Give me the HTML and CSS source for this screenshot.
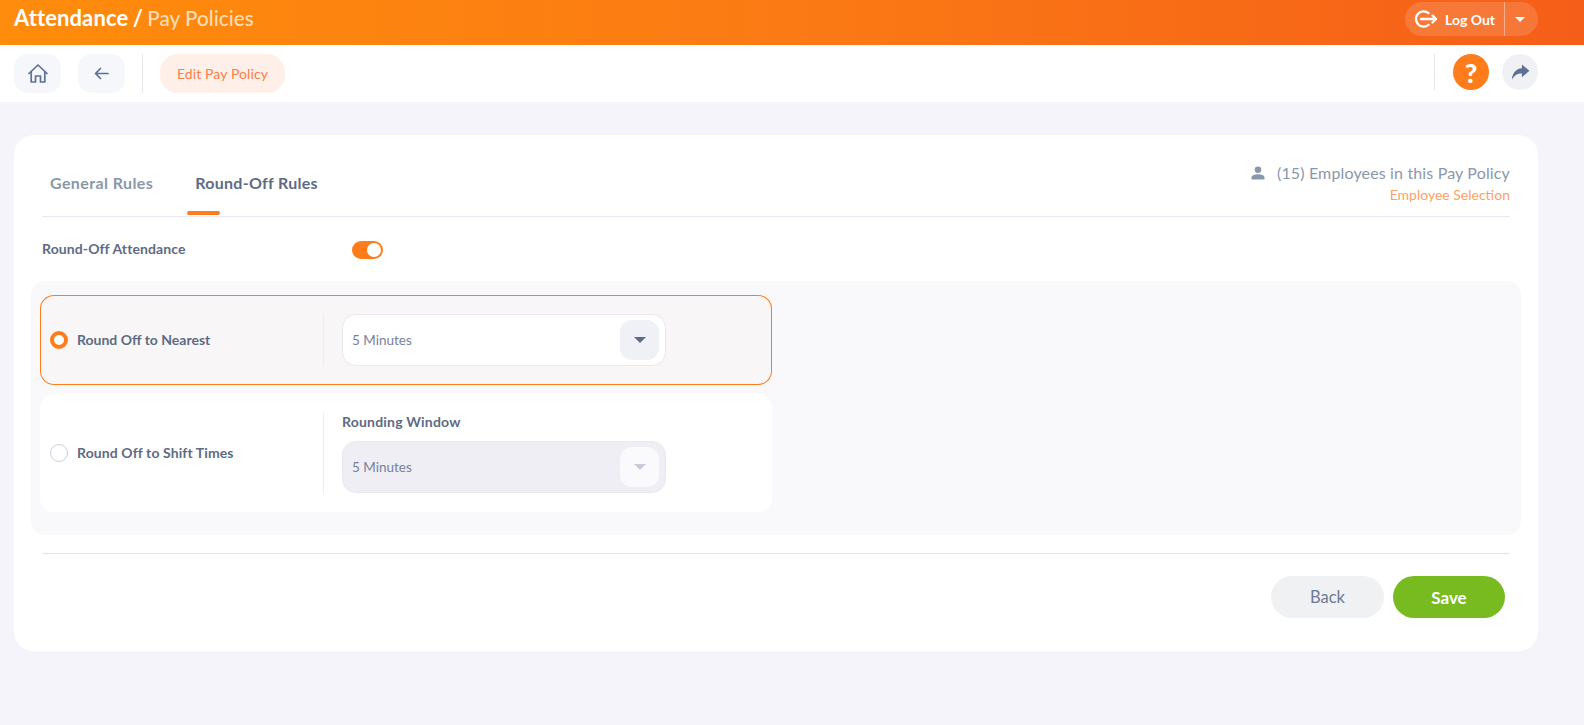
FILE: index.html
```html
<!DOCTYPE html>
<html lang="en">
<head>
<meta charset="utf-8">
<title>Pay Policies</title>
<link rel="stylesheet" href="styles.css">
</head>
<body>
<header class="topbar">
  <h1 class="crumbs"><span class="crumb-main">Attendance /</span> <span class="crumb-sub">Pay Policies</span></h1>
  <div class="logout">
    <button class="logout-btn">
      <svg class="logout-icon" width="24" height="18" viewBox="0 0 24 18" fill="none" stroke="#fff" stroke-width="2.4" stroke-linecap="round" stroke-linejoin="round"><path d="M14.5 3.2A7.6 7.6 0 1 0 14.5 14.8"/><path d="M7 9H22M18.5 5.5 22 9l-3.5 3.5"/></svg>
      <span>Log Out</span>
    </button>
    <span class="logout-caret"><i class="caret caret-white"></i></span>
  </div>
</header>

<nav class="toolbar">
  <button class="tool-btn" aria-label="Home">
    <svg width="20" height="19" viewBox="0 0 20 19" fill="none" stroke="#5d7196" stroke-width="1.7" stroke-linejoin="round" stroke-linecap="round"><path d="M1 9.500 10 1l9 8.500"/><path d="M3.200 7.800V18h4.300v-6h5v6h4.300V7.800"/></svg>
  </button>
  <button class="tool-btn" aria-label="Back">
    <svg width="15" height="13" viewBox="0 0 15 13" fill="none" stroke="#5d7196" stroke-width="1.7" stroke-linecap="round" stroke-linejoin="round"><path d="M14 6.500H1.500M6.500 1.500l-5 5 5 5"/></svg>
  </button>
  <span class="tool-divider"></span>
  <span class="tool-pill">Edit Pay Policy</span>
  <span class="tool-spacer"></span>
  <span class="tool-divider tool-divider-right"></span>
  <span class="help">?</span>
  <span class="share">
    <svg width="19" height="16" viewBox="0 0 20 17"><path fill="#5d7196" d="M11.500 0.500 19.500 7.300l-8 6.700V10C6.500 10 3.500 12 0.800 16.500 1.300 10 5 5 11.500 4.500z"/></svg>
  </span>
</nav>

<main class="page">
  <section class="card">
    <div class="tabs">
      <div class="tab-list">
        <span class="tab">General Rules</span>
        <span class="tab tab-active">Round-Off Rules</span>
      </div>
      <div class="emp">
        <div class="emp-count">
          <svg width="14" height="14" viewBox="0 0 14 14" fill="#8996ab"><circle cx="7" cy="3.800" r="3.300"/><path d="M0.500 13.500V11.500C0.500 9.300 4 8.300 7 8.300s6.500 1 6.500 3.200v2z"/></svg>
          <span>(15) Employees in this Pay Policy</span>
        </div>
        <a class="emp-link">Employee Selection</a>
      </div>
    </div>

    <div class="toggle-row">
      <span class="toggle-label">Round-Off Attendance</span>
      <span class="toggle"><i class="toggle-knob"></i></span>
    </div>

    <div class="panel">
      <div class="option option-on">
        <div class="option-left">
          <span class="radio radio-on"></span>
          <span class="option-label option-label-tight">Round Off to Nearest</span>
        </div>
        <div class="option-right">
          <div class="select">
            <span>5 Minutes</span>
            <span class="select-btn"><i class="caret caret-dark"></i></span>
          </div>
        </div>
      </div>
      <div class="option">
        <div class="option-left">
          <span class="radio"></span>
          <span class="option-label">Round Off to Shift Times</span>
        </div>
        <div class="option-right">
          <div class="field-label">Rounding Window</div>
          <div class="select select-off">
            <span>5 Minutes</span>
            <span class="select-btn"><i class="caret caret-light"></i></span>
          </div>
        </div>
      </div>
    </div>

    <div class="actions">
      <button class="btn btn-back">Back</button>
      <button class="btn btn-save">Save</button>
    </div>
  </section>
</main>
</body>
</html>
```

FILE: styles.css
```css
* { box-sizing: border-box; }
html, body { margin: 0; padding: 0; }
body {
  background: #f4f4fa;
  font-family: "Lato", "Noto Sans", sans-serif;
  color: #5d6b85;
  height: 725px;
  overflow: hidden;
}
button { font-family: inherit; border: 0; padding: 0; cursor: pointer; }

.topbar {
  height: 45px;
  padding: 2px 46px 9px 14px;
  display: flex;
  justify-content: space-between;
  align-items: flex-start;
  background: linear-gradient(90deg, #ff8c0c 0%, #fb7a14 50%, #f55e18 100%);
}
.crumbs { margin: 0; font-size: 20.700px; line-height: 32px; font-weight: 400; word-spacing: -1px; }
.crumb-main { color: #fff; font-weight: 700; font-size: 22px; letter-spacing: .1px; }
.crumb-sub { color: #fedcb4; font-weight: 500; word-spacing: 0; }

.logout {
  width: 133px;
  height: 34px;
  display: flex;
  background: rgba(255,255,255,.14);
  border-radius: 17px;
}
.logout-btn {
  width: 100px;
  display: flex;
  align-items: center;
  padding-left: 9px;
  gap: 7px;
  background: transparent;
  color: #fff;
  font-size: 14px;
  font-weight: 700;
  border-right: 1px solid rgba(255,255,255,.4);
}
.logout-caret { flex: 1; display: flex; align-items: center; justify-content: center; padding-right: 3px; }

.caret {
  display: block;
  width: 0; height: 0;
  border-left: 6px solid transparent;
  border-right: 6px solid transparent;
  border-top: 6px solid #fff;
}
.caret-white { border-left-width: 5px; border-right-width: 5px; border-top-width: 5px; }
.caret-dark { border-top-color: #5d6b85; }
.caret-light { border-top-color: #c8ccd9; }

.toolbar {
  height: 57px;
  background: #fff;
  display: flex;
  align-items: flex-start;
  padding: 9px 46px 0 14px;
}
.tool-btn {
  width: 47px; height: 39px;
  border-radius: 14px;
  background: #f6f7fa;
  margin-right: 17px;
  display: flex; align-items: center; justify-content: center;
}
.tool-divider { width: 1px; height: 39px; background: #e4e6ee; }
.tool-pill {
  margin-left: 17px;
  width: 125px; height: 39px;
  border-radius: 18px;
  background: #fef0e8;
  color: #fa7d4a;
  font-size: 14px;
  letter-spacing: .1px;
  display: flex; align-items: center; justify-content: center;
}
.tool-spacer { flex: 1; }
.tool-divider-right { height: 36px; margin-right: 18px; }
.help {
  width: 36px; height: 36px;
  border-radius: 50%;
  background: #fe7c1b;
  color: #fff;
  font-size: 27px; font-weight: 900;
  display: flex; align-items: center; justify-content: center;
  margin-right: 13px;
}
.share {
  width: 36px; height: 36px;
  border-radius: 50%;
  background: #f0f1f4;
  display: flex; align-items: center; justify-content: center;
}

.page { padding: 33px 46px 0 14px; }
.card {
  height: 516px;
  background: #fff;
  border-radius: 20px;
  padding: 0 28px 0 17px;
}

.tabs {
  height: 82px;
  margin: 0 0 0 11px;
  border-bottom: 1px solid #e8e8f2;
  display: flex;
  justify-content: space-between;
}
.tab-list { display: flex; padding-left: 0; }
.tab {
  position: relative;
  margin: 0 8px;
  font-size: 16px;
  letter-spacing: .4px;
  font-weight: 700;
  line-height: 20px;
  padding-top: 38px;
  color: #8b97a8;
}
.tab + .tab { margin-left: 34px; }
.tab-active { color: #5d6b85; letter-spacing: .28px; }
.tab-active::after {
  content: "";
  position: absolute;
  left: -8px;
  top: 76px;
  width: 33px;
  height: 4px;
  border-radius: 2px;
  background: #fe7c1b;
}
.emp { padding-top: 28px; text-align: right; }
.emp-count {
  display: flex; align-items: center; justify-content: flex-end;
  gap: 12px;
  font-size: 16px; line-height: 20px;
  letter-spacing: .15px;
  color: #8b97ab;
}
.emp-link { display: block; margin-top: 3px; font-size: 14px; line-height: 18px; color: #fd9f66; }

.toggle-row {
  height: 64px;
  margin-left: 11px;
  display: flex;
  align-items: flex-start;
  padding-top: 24px;
}
.toggle-label { width: 310px; font-size: 14px; letter-spacing: .1px; font-weight: 700; line-height: 18px; margin-top: -1px; margin-bottom: 1px; }
.toggle {
  width: 31px; height: 18px;
  border-radius: 9px;
  background: #fe7c1b;
  display: flex; align-items: center; justify-content: flex-end;
  padding-right: 2px;
}
.toggle-knob { width: 14px; height: 14px; border-radius: 50%; background: #fff; display: block; }

.panel {
  height: 254px;
  width: 1490px;
  background: #f9f9fb;
  border-radius: 14px;
  padding: 14px 9px;
  display: flex;
  flex-direction: column;
  gap: 9px;
}
.option {
  width: 732px;
  height: 118px;
  background: #fff;
  border-radius: 14px;
  padding: 19px 0;
  display: flex;
}
.option-on {
  height: 90px;
  background: #f8f6f7;
  box-shadow: inset 0 0 0 1px #fe7c1b;
}
.option-left {
  width: 284px;
  padding-left: 10px;
  display: flex;
  align-items: center;
  gap: 9px;
  border-right: 1px solid #ececf1;
}
.option-label { font-size: 14px; letter-spacing: .1px; font-weight: 700; margin-bottom: 2px; }
.option-label-tight { letter-spacing: 0; }
.radio {
  width: 18px; height: 18px;
  border-radius: 50%;
  background: #fff;
  border: 1px solid #ccd0e0;
}
.radio-on { border: 4px solid #fe7c1b; }
.option-right { padding-left: 18px; display: flex; flex-direction: column; justify-content: flex-end; }
.field-label { font-size: 14px; letter-spacing: .2px; font-weight: 700; line-height: 18px; margin-bottom: 10px; }
.select {
  width: 324px; height: 52px;
  border: 1px solid #e8e8f0;
  border-radius: 14px;
  background: #fff;
  padding: 0 6px 0 9px;
  display: flex; align-items: center; justify-content: space-between;
  font-size: 13.500px;
  color: #76829b;
}
.select-btn {
  width: 39px; height: 40px;
  border-radius: 12px;
  background: #f0f1f6;
  display: flex; align-items: center; justify-content: center;
}
.select-off { background: #eeeef4; }
.select-off .select-btn { background: #fafafc; }

.actions {
  margin: 18px 0 0 11px;
  padding: 22px 5px 0 0;
  border-top: 1px solid #e4e4e8;
  display: flex;
  justify-content: flex-end;
  gap: 9px;
}
.btn {
  width: 113px; height: 42px;
  border-radius: 21px;
  font-size: 16.500px;
}
.btn-back { background: #f0f1f3; color: #6b7a95; }
.btn-save { width: 112px; background: #78bb20; color: #fff; font-size: 17px; font-weight: 700; }
```
